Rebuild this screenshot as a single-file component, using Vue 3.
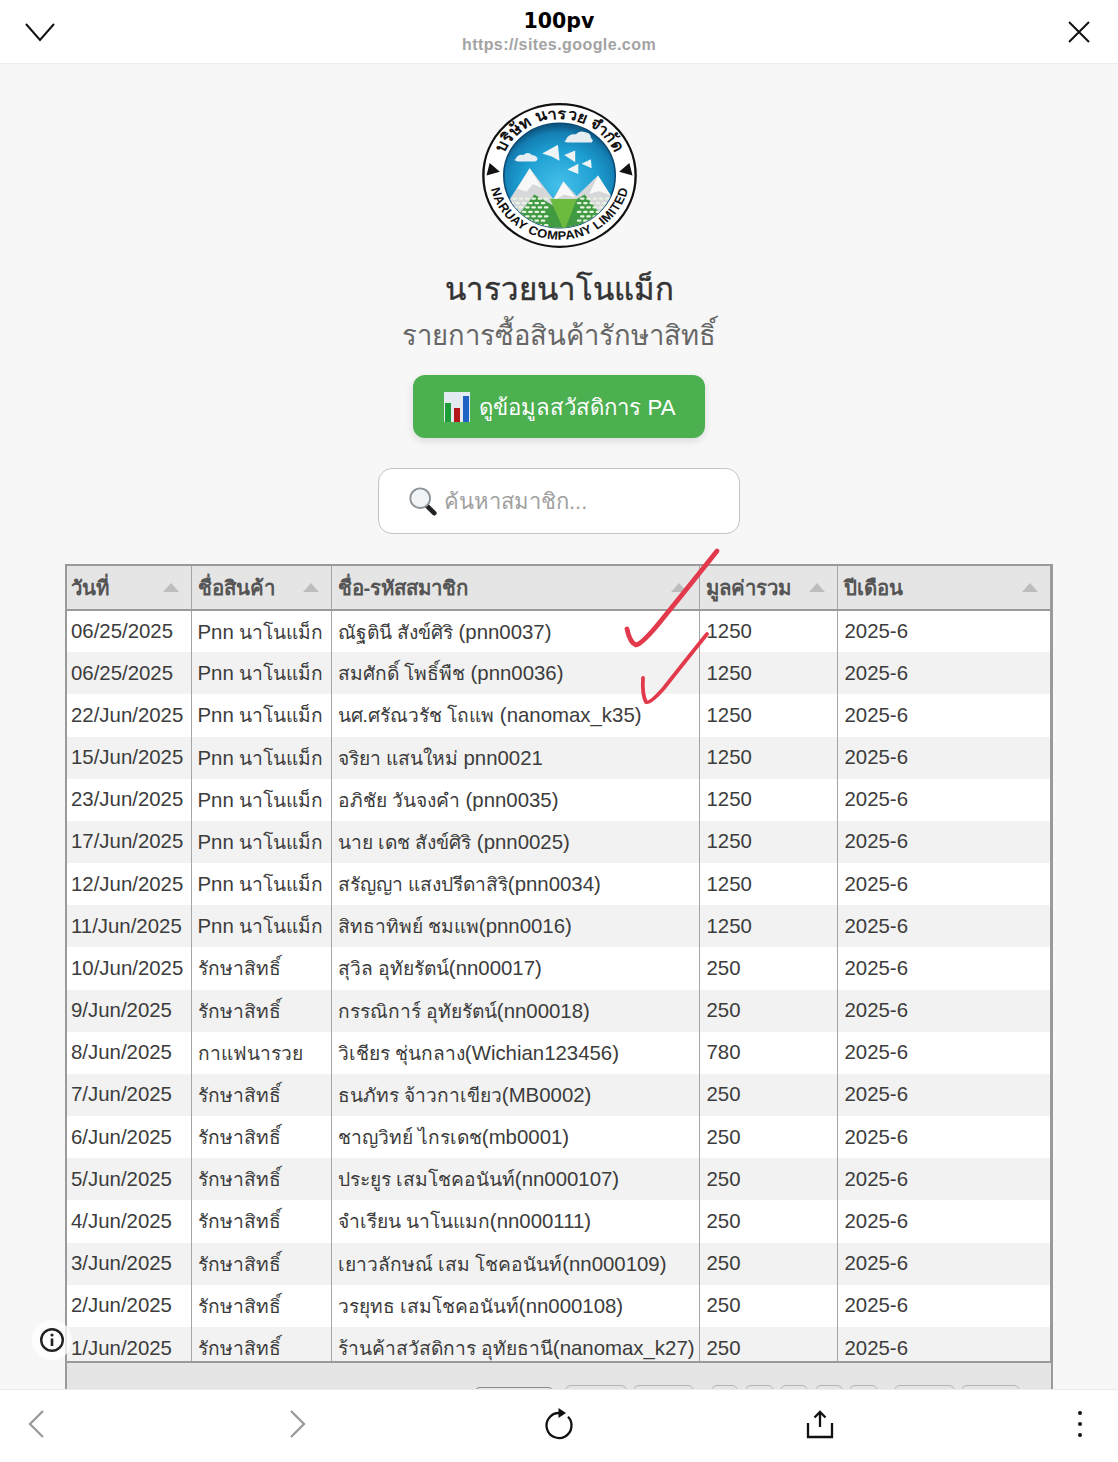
<script setup>
const rows = [
  ['06/25/2025', 'Pnn นาโนแม็ก', 'ณัฐตินี สังข์ศิริ (pnn0037)', '1250'],
  ['06/25/2025', 'Pnn นาโนแม็ก', 'สมศักดิ์ โพธิ์พืช (pnn0036)', '1250'],
  ['22/Jun/2025', 'Pnn นาโนแม็ก', 'นศ.ศรัณวรัช โถแพ (nanomax_k35)', '1250'],
  ['15/Jun/2025', 'Pnn นาโนแม็ก', 'จริยา แสนใหม่ pnn0021', '1250'],
  ['23/Jun/2025', 'Pnn นาโนแม็ก', 'อภิชัย วันจงคำ (pnn0035)', '1250'],
  ['17/Jun/2025', 'Pnn นาโนแม็ก', 'นาย เดช สังข์ศิริ (pnn0025)', '1250'],
  ['12/Jun/2025', 'Pnn นาโนแม็ก', 'สรัญญา แสงปรีดาสิริ(pnn0034)', '1250'],
  ['11/Jun/2025', 'Pnn นาโนแม็ก', 'สิทธาทิพย์ ชมแพ(pnn0016)', '1250'],
  ['10/Jun/2025', 'รักษาสิทธิ์', 'สุวิล อุทัยรัตน์(nn00017)', '250'],
  ['9/Jun/2025', 'รักษาสิทธิ์', 'กรรณิการ์ อุทัยรัตน์(nn00018)', '250'],
  ['8/Jun/2025', 'กาแฟนารวย', 'วิเชียร ชุ่นกลาง(Wichian123456)', '780'],
  ['7/Jun/2025', 'รักษาสิทธิ์', 'ธนภัทร จ้าวกาเขียว(MB0002)', '250'],
  ['6/Jun/2025', 'รักษาสิทธิ์', 'ชาญวิทย์ ไกรเดช(mb0001)', '250'],
  ['5/Jun/2025', 'รักษาสิทธิ์', 'ประยูร เสมโชคอนันท์(nn000107)', '250'],
  ['4/Jun/2025', 'รักษาสิทธิ์', 'จำเรียน นาโนแมก(nn000111)', '250'],
  ['3/Jun/2025', 'รักษาสิทธิ์', 'เยาวลักษณ์ เสม โชคอนันท์(nn000109)', '250'],
  ['2/Jun/2025', 'รักษาสิทธิ์', 'วรยุทธ เสมโชคอนันท์(nn000108)', '250'],
  ['1/Jun/2025', 'รักษาสิทธิ์', 'ร้านค้าสวัสดิการ อุทัยธานี(nanomax_k27)', '250']
]
const columns = [
  { label: 'วันที่', width: 124 },
  { label: 'ชื่อสินค้า', width: 140 },
  { label: 'ชื่อ-รหัสสมาชิก', width: 368 },
  { label: 'มูลค่ารวม', width: 138 },
  { label: 'ปีเดือน', width: 213 }
]
const pageButtons = [
  { width: 80, gap: 0 }, { width: 62, gap: 11 }, { width: 61, gap: 6 }, { width: 27, gap: 17 }, { width: 29, gap: 7 },
  { width: 28, gap: 6 }, { width: 28, gap: 7 }, { width: 29, gap: 6 }, { width: 61, gap: 16 }, { width: 59, gap: 6 }
]
// the Thai fallback runs wider than the latin face, so Thai runs get their own size
function runs(text) {
  return text.split(/([\u0E00-\u0E7F.]+(?: [\u0E00-\u0E7F.]+)*)/).filter(Boolean).map(t => ({
    t,
    thai: /[\u0E00-\u0E7F]/.test(t)
  }))
}
// white flower bushes in the logo
const bushes = []
for (let y = 130; y < 170; y += 6) {
  for (let x = 36; x < 84; x += 8) bushes.push({ x: x + (y % 4) * 2, y })
  for (let x = 122; x < 166; x += 8) bushes.push({ x: x + (y % 4) * 2, y })
}
</script>

<template>
  <div class="app">
    <header class="topbar">
      <svg class="top-icon" viewBox="0 0 30 20" width="30" height="20"><path d="M1 2 L15 18 L29 2" /></svg>
      <div class="top-title">
        <div class="site-name">100pv</div>
        <div class="site-url">https://sites.google.com</div>
      </div>
      <svg class="top-icon" viewBox="0 0 24 24" width="24" height="24"><path d="M2 2 L22 22 M22 2 L2 22" /></svg>
    </header>

    <main class="page">
      <svg class="logo" viewBox="0 0 200 200" width="157" height="147" preserveAspectRatio="none">
        <defs>
          <radialGradient id="sky" cx="50%" cy="60%" r="58%">
            <stop offset="0" stop-color="#45c0ea" />
            <stop offset="0.6" stop-color="#1e9fd2" />
            <stop offset="0.88" stop-color="#147fb4" />
            <stop offset="1" stop-color="#0d5a86" />
          </radialGradient>
          <clipPath id="inner"><circle cx="100" cy="100" r="71" /></clipPath>
          <path id="topArc" d="M 24 108 A 76.5 76.5 0 1 1 176 108" />
          <path id="botArc" d="M 11 84 A 90 90 0 1 0 189 84" />
        </defs>
        <circle cx="100" cy="100" r="97" fill="#fff" stroke="#111" stroke-width="3" />
        <circle cx="100" cy="100" r="71" fill="url(#sky)" stroke="#0c4a73" stroke-width="2" />
        <g clip-path="url(#inner)">
          <polygon points="20,160 62,90 92,132 105,108 122,128 149,100 185,160 100,185" fill="#d5d7d8" />
          <polygon points="62,90 78,117 66,112 58,122 46,118" fill="#f8f8f8" />
          <polygon points="105,108 120,130 106,126 92,134" fill="#f8f8f8" />
          <polygon points="149,100 165,127 150,121 138,125" fill="#f8f8f8" />
          <polygon points="30,178 68,126 100,146 132,126 172,178" fill="#3f9a41" />
          <polygon points="106,176 88,132 122,132" fill="#6dbb3e" />
          <rect v-for="(b, i) in bushes" :key="i" :x="b.x" :y="b.y" width="6" height="3" rx="1.5" fill="#e9f3e2" />
          <path d="M108 52 q3 -9 13 -8 q4 -6 12 -3 q7 1 7 8 q4 3 1 6 H110 q-6 -1 -2 -3Z" fill="#e6eef2" />
          <path d="M44 78 q2 -7 10 -6 q6 -5 11 0 q7 1 7 6 q-1 3 -4 3 H47 q-5 -1 -4 -3Z" fill="#e6eef2" />
          <path d="M78 70 L98 58 L100 80 L90 74 Z" fill="#eef3f5" />
          <path d="M106 72 L120 66 L120 82 Z" fill="#eef3f5" />
          <path d="M110 92 L124 84 L124 98 Z" fill="#eef3f5" />
          <path d="M128 84 L140 78 L141 90 Z" fill="#eef3f5" />
        </g>
        <text class="logo-thai"><textPath href="#topArc" startOffset="50%" text-anchor="middle">บริษัท นารวย จำกัด</textPath></text>
        <text class="logo-en"><textPath href="#botArc" startOffset="50%" text-anchor="middle">NARUAY COMPANY LIMITED</textPath></text>
        <path d="M7 100 L11 83 L24 95 Z M193 100 L189 83 L176 95 Z" fill="#111" />
      </svg>

      <h1 class="brand">นารวยนาโนแม็ก</h1>
      <h2 class="subtitle">รายการซื้อสินค้ารักษาสิทธิ์</h2>

      <button class="pa-button">
        <svg viewBox="0 0 26 30" width="26" height="30">
          <rect width="26" height="30" fill="#e3eaf0" />
          <rect x="1" y="11" width="6" height="19" fill="#1f9d3a" />
          <rect x="10" y="16" width="6" height="14" fill="#b3151b" />
          <rect x="19" y="4" width="6" height="26" fill="#1d62c4" />
        </svg>
        <span>ดูข้อมูลสวัสดิการ PA</span>
      </button>

      <div class="search">
        <svg viewBox="0 0 32 32" width="30" height="30">
          <path d="M20 21 L28 29" stroke="#222" stroke-width="5" stroke-linecap="round" />
          <circle cx="13" cy="13" r="10.5" fill="#f1f4f6" stroke="#8d9499" stroke-width="2" />
        </svg>
        <span>ค้นหาสมาชิก...</span>
      </div>

      <section class="table-box">
        <div class="table-clip">
          <table>
            <colgroup>
              <col v-for="c in columns" :key="c.label" :style="{ width: c.width + 'px' }">
            </colgroup>
            <thead>
              <tr>
                <th v-for="c in columns" :key="c.label">
                  <div class="th-inner"><span>{{ c.label }}</span><i class="sort"></i></div>
                </th>
              </tr>
            </thead>
            <tbody>
              <tr v-for="(r, i) in rows" :key="i">
                <td v-for="(cell, j) in r" :key="j" class="nowrap"><span v-for="(s, k) in runs(cell)" :key="k" :class="{ thai: s.thai }">{{ s.t }}</span></td>
                <td>2025-6</td>
              </tr>
            </tbody>
          </table>
        </div>
        <div class="table-foot">
          <button
            v-for="(b, i) in pageButtons"
            :key="i"
            class="page-btn"
            :class="{ first: i === 0 }"
            :style="{ width: b.width + 'px', marginLeft: b.gap + 'px' }"
          ></button>
        </div>
        <svg class="marks" viewBox="65 564 988 826" width="988" height="826">
          <path d="M627 629 Q630 643 636 645 Q642 644 660 622 Q690 585 717 551" stroke-width="4.8" />
          <path d="M643 678 Q642 695 646 702 Q650 704 664 688 Q690 655 707 634" stroke-width="3.8" />
        </svg>
      </section>

      <div class="info">
        <svg viewBox="0 0 26 26" width="26" height="26">
          <circle cx="13" cy="13" r="10.8" fill="none" stroke="#222" stroke-width="2.4" />
          <circle cx="13" cy="8" r="1.6" fill="#222" />
          <path d="M13 11.5 V19" stroke="#222" stroke-width="2.6" />
        </svg>
      </div>
    </main>

    <footer class="bottombar">
      <svg class="nav muted" viewBox="0 0 20 30" width="20" height="30"><path d="M16 2 L3 15 L16 28" /></svg>
      <svg class="nav muted" viewBox="0 0 20 30" width="20" height="30"><path d="M4 2 L17 15 L4 28" /></svg>
      <svg class="nav" viewBox="0 0 30 34" width="30" height="34">
        <path d="M15 6 A12.5 12.5 0 1 0 24 9.8" />
        <polygon points="14.5,1 22,6 14.5,11" />
      </svg>
      <svg class="nav" viewBox="0 0 30 34" width="30" height="34">
        <path d="M15 5 V20 M9.5 10.5 L15 5 L20.5 10.5 M3 16 V30 H27 V16" />
      </svg>
      <div class="dots"><i></i><i></i><i></i></div>
    </footer>
  </div>
</template>

<style>
html, body { margin: 0; background: #f7f7f7; }
</style>

<style scoped>
.app {
  width: 1118px;
  height: 1462px;
  display: flex;
  flex-direction: column;
  overflow: hidden;
  font-family: "Liberation Sans", "Noto Sans", sans-serif;
  color: #333;
}
.topbar {
  height: 64px;
  box-sizing: border-box;
  flex: none;
  background: #fff;
  border-bottom: 1px solid #ececec;
  display: flex;
  align-items: center;
  justify-content: space-between;
  padding: 0 27px 0 25px;
}
.top-icon path { fill: none; stroke: #111; stroke-width: 2; }
.top-title { text-align: center; margin-right: 4px; }
.site-name { font-family: "DejaVu Sans", sans-serif; font-weight: 700; font-size: 20.5px; line-height: 25px; color: #000; }
.site-url { font-size: 16px; line-height: 21px; font-weight: 700; color: #a3a3a3; letter-spacing: .42px; }
.page {
  flex: 1;
  min-height: 0;
  overflow: hidden;
  position: relative;
  background: #f7f7f7;
  display: flex;
  flex-direction: column;
  align-items: center;
  padding-top: 38px;
}
.page > * { flex: none; }
.logo-thai { font-size: 21px; font-weight: 700; fill: #111; }
.logo-en { font-size: 16.5px; font-weight: 700; fill: #111; letter-spacing: .6px; }
.brand { margin: 19px 0 0; font-size: 31.2px; line-height: 44px; font-weight: 500; color: #333; -webkit-text-stroke: .4px #333; }
.subtitle { margin: 4px 0 0; font-size: 27.4px; line-height: 40px; font-weight: 400; color: #666; }
.pa-button {
  margin-top: 19px;
  width: 292px;
  height: 63px;
  border: 0;
  border-radius: 12px;
  background: #4caf50;
  box-shadow: 0 3px 8px rgba(0,0,0,.12);
  display: flex;
  align-items: center;
  justify-content: center;
  gap: 9px;
  color: #fff;
  font: 22.2px "Liberation Sans", "Noto Sans", sans-serif;
  padding: 0 0 0 2px;
}
.search {
  margin-top: 30px;
  width: 362px;
  height: 66px;
  box-sizing: border-box;
  border: 1px solid #c4c4c4;
  border-radius: 14px;
  background: #fff;
  display: flex;
  align-items: center;
  gap: 6px;
  padding-left: 29px;
  font-size: 22px;
  color: #a0a0a0;
}
.table-box {
  margin-top: 30px;
  width: 988px;
  position: relative;
  box-sizing: border-box;
}
.table-clip {
  height: 799px;
  overflow: hidden;
  box-sizing: border-box;
  border: 2px solid #9a9a9a;
  border-right-width: 3px;
  background: #fff;
}
table {
  table-layout: fixed;
  width: 100%;
  border-collapse: collapse;
  font-size: 20.4px;
  color: #3c3c3c;
}
.thai { font-size: 19.2px; }
th {
  height: 43px;
  padding: 0 12px 0 6px;
  background: #e5e5e5;
  border-bottom: 2px solid #9a9a9a;
  border-right: 1px solid #a5a5a5;
  font-weight: 700;
  font-size: 20.4px;
  color: #555;
  text-align: left;
}
th:first-child { padding-left: 4px; }
th:last-child { border-right: 0; }
.th-inner { display: flex; align-items: center; justify-content: space-between; }
.sort {
  width: 0;
  height: 0;
  border-left: 8px solid transparent;
  border-right: 8px solid transparent;
  border-bottom: 9px solid #bdbdbd;
}
td {
  height: 42.18px;
  padding: 0 0 0 6px;
  border-right: 1px solid #a5a5a5;
  box-sizing: border-box;
}
td:first-child { padding-left: 4px; }
td:nth-child(n + 4) { padding-left: 7px; }
td:last-child { border-right: 0; }
.nowrap { white-space: nowrap; }
tbody tr:nth-child(even) td { background: #f2f2f2; }
.table-foot {
  height: 40px;
  box-sizing: border-box;
  background: #e5e5e5;
  border-left: 2px solid #9a9a9a;
  border-right: 2px solid #9a9a9a;
  display: flex;
  justify-content: flex-end;
  padding: 22px 31px 0 0;
}
.page-btn {
  height: 40px;
  flex: none;
  box-sizing: border-box;
  border: 1px solid #b5b5b5;
  border-radius: 6px;
  background: transparent;
  padding: 0;
}
.page-btn.first { border-color: #8c8c8c; margin-top: 2px; }
.marks { position: absolute; left: 0; top: 0; overflow: visible; pointer-events: none; }
.marks path { fill: none; stroke: #e23a4c; stroke-linecap: round; stroke-linejoin: round; }
.info {
  position: absolute;
  left: 32px;
  top: 1256px;
  width: 40px;
  height: 40px;
  border-radius: 50%;
  background: rgba(255,255,255,.75);
  display: flex;
  align-items: center;
  justify-content: center;
}
.bottombar {
  height: 73px;
  flex: none;
  box-sizing: border-box;
  background: #fff;
  border-top: 1px solid #ececec;
  display: grid;
  grid-template-columns: 74px 446px 78px 444px 76px;
  align-items: center;
  padding-bottom: 4px;
}
.nav { justify-self: center; }
.nav path { fill: none; stroke: #111; stroke-width: 2.3; }
.nav polygon { fill: #111; }
.nav.muted path { stroke: #9a9a9a; }
.dots { display: flex; flex-direction: column; gap: 7px; justify-self: center; }
.dots i { width: 4px; height: 4px; border-radius: 50%; background: #111; display: block; }
</style>
